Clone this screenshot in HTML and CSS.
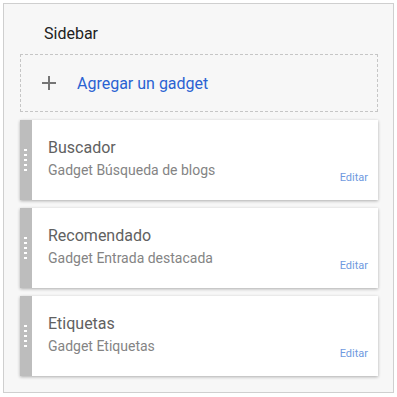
FILE: index.html
```html
<!DOCTYPE html>
<html lang="es">
<head>
<meta charset="UTF-8">
<meta name="viewport" content="width=device-width, initial-scale=1.0">
<title>Sidebar</title>
<link rel="stylesheet" href="styles.css">
</head>
<body>

<div class="panel">
  <h2 class="panel-title">Sidebar</h2>

  <a class="add-gadget" href="#">
    <svg class="plus" width="14" height="14" viewBox="0 0 14 14">
      <path d="M7 0v14M0 7h14" stroke="#757575" stroke-width="2" fill="none"/>
    </svg>
    <span>Agregar un gadget</span>
  </a>

  <div class="gadget">
    <div class="handle"><div class="dots"></div></div>
    <div class="gadget-body">
      <div class="gadget-text">
        <div class="gadget-name">Buscador</div>
        <div class="gadget-type">Gadget Búsqueda de blogs</div>
      </div>
      <a class="edit" href="#">Editar</a>
    </div>
  </div>

  <div class="gadget">
    <div class="handle"><div class="dots"></div></div>
    <div class="gadget-body">
      <div class="gadget-text">
        <div class="gadget-name">Recomendado</div>
        <div class="gadget-type">Gadget Entrada destacada</div>
      </div>
      <a class="edit" href="#">Editar</a>
    </div>
  </div>

  <div class="gadget">
    <div class="handle"><div class="dots"></div></div>
    <div class="gadget-body">
      <div class="gadget-text">
        <div class="gadget-name">Etiquetas</div>
        <div class="gadget-type">Gadget Etiquetas</div>
      </div>
      <a class="edit" href="#">Editar</a>
    </div>
  </div>
</div>

</body>
</html>
```

FILE: styles.css
```css
body {
  margin: 0;
  font-family: Roboto, "Liberation Sans", Arial, sans-serif;
  background-color: #ffffff;
}

.panel {
  box-sizing: border-box;
  width: 391px;
  height: 390px;
  margin: 3px;
  padding: 20px 15px 0 16px;
  background-color: #f7f7f7;
  border: 1px solid #cfcfcf;
}

.panel-title {
  margin: 0 0 10px 24px;
  font-size: 16px;
  font-weight: 400;
  line-height: 20px;
  color: #212121;
}

.add-gadget {
  box-sizing: border-box;
  display: flex;
  align-items: center;
  height: 58px;
  padding-left: 21px;
  border: 1px dashed #c6c6c6;
  text-decoration: none;
  font-size: 16px;
  color: #2a62d2;
}

.add-gadget .plus {
  margin-right: 21px;
}

.gadget {
  display: flex;
  height: 80px;
  margin-top: 8px;
  box-shadow: 0 1px 3px rgba(0, 0, 0, 0.3);
}

.handle {
  display: flex;
  align-items: center;
  width: 12px;
  background-color: #bdbdbd;
}

.dots {
  width: 3px;
  height: 22px;
  margin-left: 4px;
  background: repeating-linear-gradient(to bottom, #ffffff 0 2px, transparent 2px 5px);
}

.gadget-body {
  flex: 1;
  display: flex;
  justify-content: space-between;
  padding: 18px 10px 0 16px;
  background-color: #ffffff;
}

.gadget-name {
  font-size: 16px;
  line-height: 20px;
  color: #616161;
}

.gadget-type {
  margin-top: 2px;
  font-size: 14px;
  line-height: 20px;
  color: #848484;
}

.edit {
  align-self: flex-end;
  margin-bottom: 15px;
  font-size: 11px;
  line-height: 14px;
  color: #6f9ae0;
  text-decoration: none;
}
```
